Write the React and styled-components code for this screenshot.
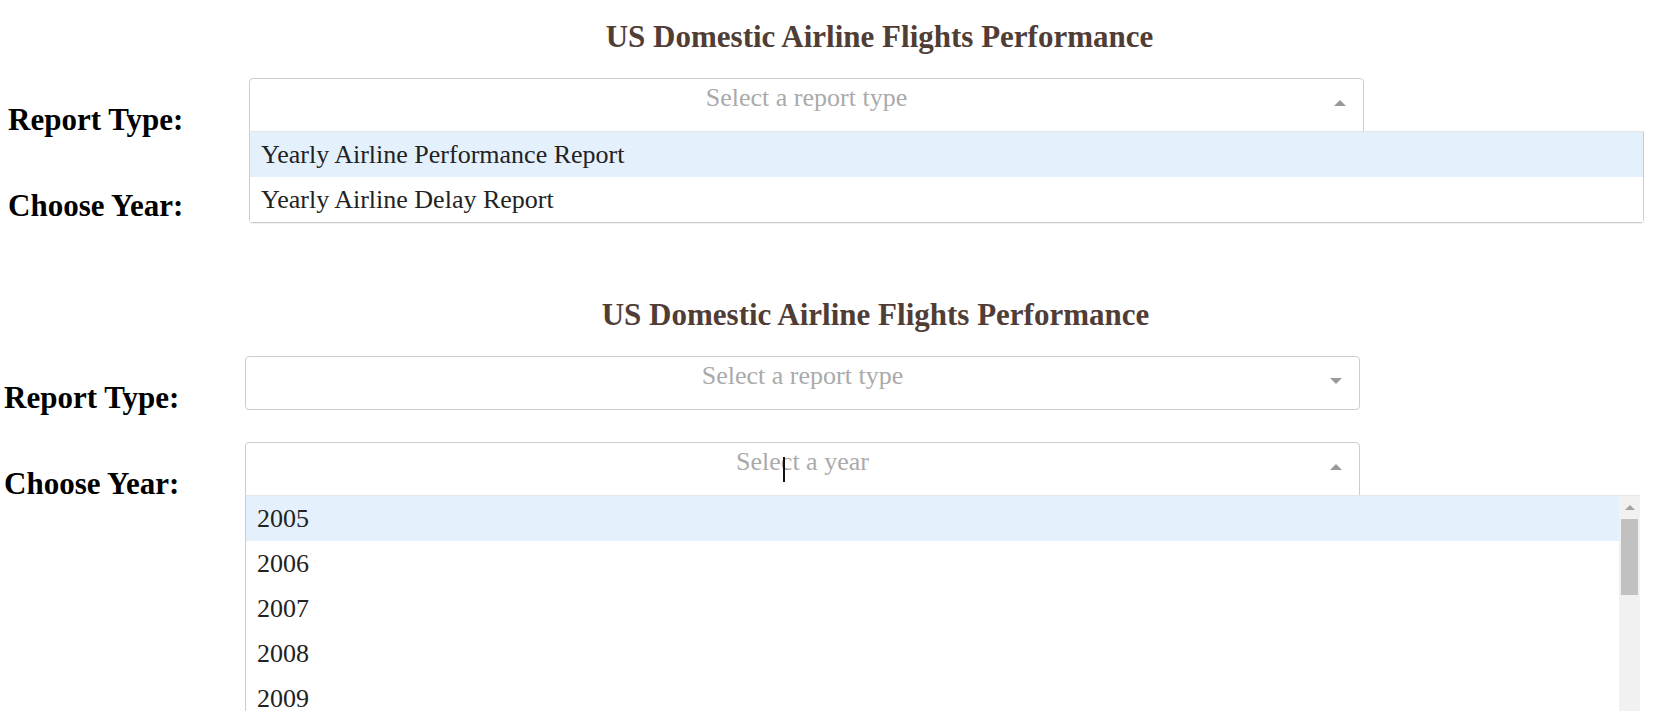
import React from "react";
import styled, { createGlobalStyle } from "styled-components";

const Global = createGlobalStyle`
  html, body {
    margin: 0;
    padding: 0;
    background: #ffffff;
    overflow: hidden;
  }
  body {
    font-family: "Liberation Serif", "Times New Roman", serif;
  }
`;

const Page = styled.div`
  display: flex;
  flex-direction: column;
  width: 1666px;
  height: 711px;
  overflow: hidden;
`;

const Panel = styled.section`
  display: flex;
  flex-direction: column;
  flex-shrink: 0;
  width: 1743px;
  height: 278px;
  margin-left: ${(p) => p.$shift}px;
  position: relative;
`;

const Title = styled.h1`
  margin: 0 0 21px;
  padding-top: 20px;
  font-size: 31px;
  line-height: 34px;
  font-weight: 700;
  color: #503d36;
  text-align: center;
`;

const Row = styled.div`
  display: flex;
  align-items: flex-start;
  height: 86px;
  position: relative;
  z-index: ${(p) => (p.$raised ? 2 : 1)};
`;

const Label = styled.h2`
  width: 241px;
  flex-shrink: 0;
  margin: 28px 0 0;
  font-size: 31px;
  line-height: 34px;
  font-weight: 700;
  color: #000;
  white-space: nowrap;
`;

const DropWrap = styled.div`
  position: relative;
  width: 1115px;
  padding-top: 3px;
`;

const Control = styled.div`
  display: grid;
  grid-template-columns: 46px 1fr 46px;
  box-sizing: border-box;
  height: 54px;
  border: 1px solid #cccccc;
  border-radius: ${(p) => (p.$open ? "4px 4px 0 0" : "4px")};
  background: #fff;
  position: relative;
`;

const Placeholder = styled.div`
  grid-column: 2;
  align-self: start;
  font-size: 26px;
  line-height: 38px;
  color: #aaaaaa;
  text-align: center;
  white-space: nowrap;
`;

const ArrowZone = styled.div`
  grid-column: 3;
  display: flex;
  align-items: center;
  justify-content: center;
  padding-bottom: 4px;
`;

const Arrow = styled.span`
  width: 0;
  height: 0;
  border-left: 6px solid transparent;
  border-right: 6px solid transparent;
  ${(p) =>
    p.$up
      ? "border-bottom: 6px solid #999999;"
      : "border-top: 6px solid #999999;"}
`;

const Cursor = styled.span`
  position: absolute;
  left: ${(p) => p.$x}px;
  top: 14px;
  width: 1.5px;
  height: 25px;
  background: #111;
`;

const Menu = styled.div`
  position: absolute;
  top: 100%;
  left: 0;
  width: 1395px;
  box-sizing: border-box;
  margin-top: -1px;
  display: flex;
  background: #fff;
  border: 1px solid #cccccc;
  border-top-color: #e6e6e6;
  border-radius: 0 0 4px 4px;
  box-shadow: 0 1px 0 rgba(0, 0, 0, 0.06);
  ${(p) => (p.$tall ? "height: 240px; border-right: none;" : "")}
`;

const OptionList = styled.div`
  flex: 1;
  display: flex;
  flex-direction: column;
`;

const Option = styled.div`
  height: 45px;
  padding-left: 11px;
  font-size: 26px;
  line-height: 45px;
  color: #222222;
  white-space: nowrap;
  background: ${(p) => (p.$focused ? "#e4f1fc" : "#ffffff")};
`;

const ScrollTrack = styled.div`
  width: 21px;
  flex-shrink: 0;
  display: flex;
  flex-direction: column;
  background: #f1f1f1;
`;

const ScrollButton = styled.div`
  height: 23px;
  display: flex;
  align-items: center;
  justify-content: center;
`;

const ScrollArrow = styled.span`
  width: 0;
  height: 0;
  border-left: 5px solid transparent;
  border-right: 5px solid transparent;
  border-bottom: 5px solid #a3a3a3;
`;

const ScrollThumb = styled.div`
  height: 76px;
  margin: 0 2px;
  background: #c1c1c1;
`;

function Dropdown({ placeholder, open, options, focusIndex = 0, scroll, cursorX }) {
  return (
    <DropWrap>
      <Control $open={open}>
        <Placeholder>{placeholder}</Placeholder>
        <ArrowZone>
          <Arrow $up={open} />
        </ArrowZone>
        {cursorX != null && <Cursor $x={cursorX} />}
      </Control>
      {open && (
        <Menu $tall={scroll}>
          <OptionList>
            {options.map((o, i) => (
              <Option key={o} $focused={i === focusIndex}>
                {o}
              </Option>
            ))}
          </OptionList>
          {scroll && (
            <ScrollTrack>
              <ScrollButton>
                <ScrollArrow />
              </ScrollButton>
              <ScrollThumb />
            </ScrollTrack>
          )}
        </Menu>
      )}
    </DropWrap>
  );
}

const REPORTS = ["Yearly Airline Performance Report", "Yearly Airline Delay Report"];
const YEARS = ["2005", "2006", "2007", "2008", "2009"];

export default function App() {
  return (
    <Page>
      <Global />
      <Panel $shift={8}>
        <Title>US Domestic Airline Flights Performance</Title>
        <Row $raised>
          <Label>Report Type:</Label>
          <Dropdown placeholder="Select a report type" open options={REPORTS} />
        </Row>
        <Row>
          <Label>Choose Year:</Label>
          <Dropdown placeholder="Select a year" />
        </Row>
      </Panel>
      <Panel $shift={4}>
        <Title>US Domestic Airline Flights Performance</Title>
        <Row>
          <Label>Report Type:</Label>
          <Dropdown placeholder="Select a report type" />
        </Row>
        <Row $raised>
          <Label>Choose Year:</Label>
          <Dropdown placeholder="Select a year" open options={YEARS} scroll cursorX={537} />
        </Row>
      </Panel>
    </Page>
  );
}
